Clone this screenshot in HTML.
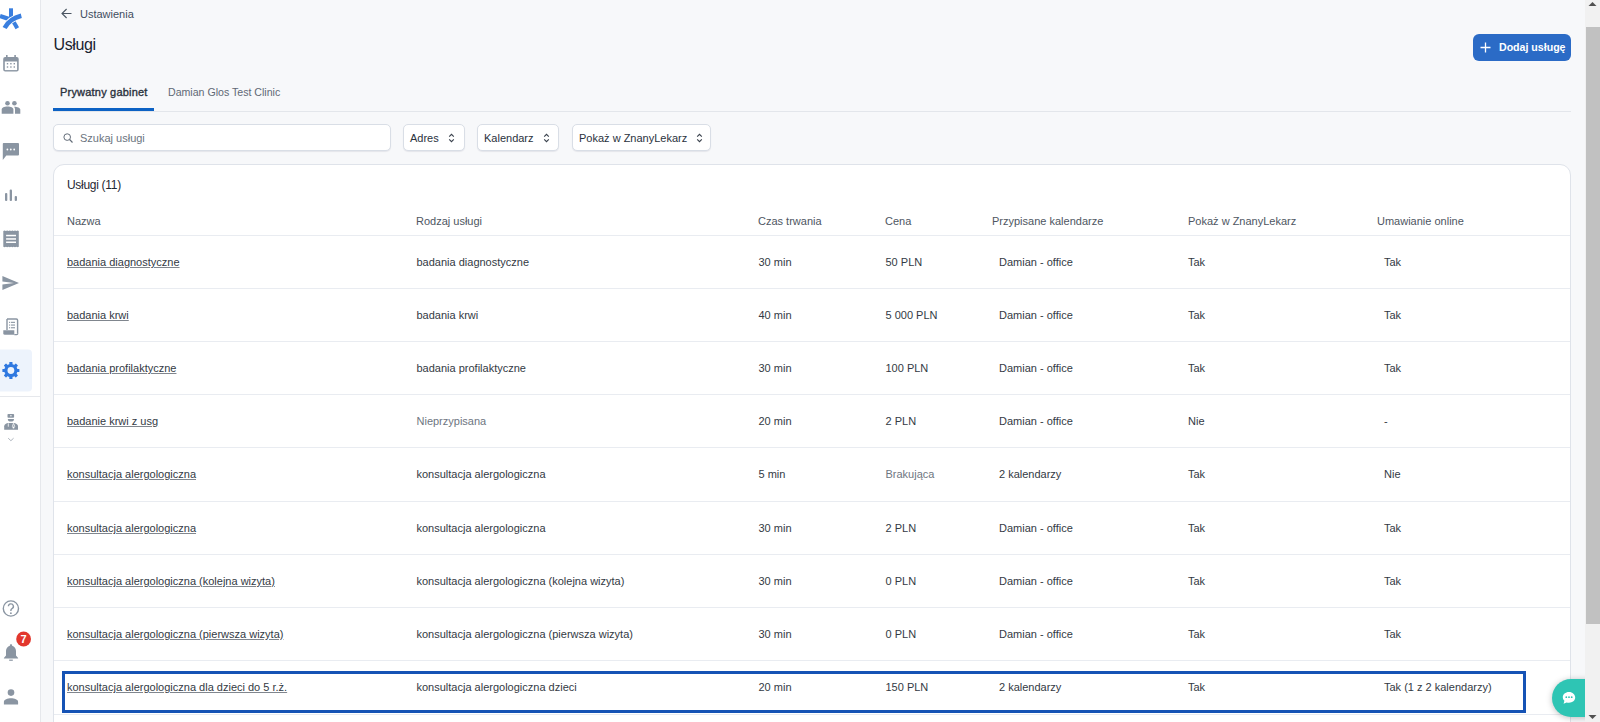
<!DOCTYPE html>
<html><head><meta charset="utf-8">
<style>
*{margin:0;padding:0;box-sizing:border-box}
html,body{width:1600px;height:722px;overflow:hidden}
body{background:#f7f8fa;font-family:"Liberation Sans",sans-serif;font-size:11px;color:#333a44;position:relative}
.a{position:absolute;white-space:nowrap;line-height:13px}
.g{color:#6e7681}
#side{position:absolute;left:0;top:0;width:41px;height:722px;background:#fff;border-right:1px solid #e6e8ec}
.ic{fill:#8a95a2}
#scroll{position:absolute;left:1585px;top:0;width:15px;height:722px;background:#f1f1f1}
#thumb{position:absolute;left:1px;top:27px;width:14px;height:597px;background:#c1c1c1}
.btn{position:absolute;left:1473px;top:34px;width:98px;height:27px;background:#2b6bc6;border-radius:6px;color:#fff}
.sel{position:absolute;top:124px;height:27px;background:#fff;border:1px solid #d9dee6;border-radius:5px;box-shadow:0 1px 1px rgba(20,30,60,.08)}
#card{position:absolute;left:53px;top:164px;width:1518px;height:600px;background:#fff;border:1px solid #dfe3ea;border-radius:11px}
.hl{position:absolute;left:54px;width:1516px;height:1px;background:#e9ecf1}
.lnk{text-decoration:underline;text-decoration-color:#80868e;text-underline-offset:1px}
.hd{color:#4e5662}
</style></head><body>

<div id="side">
<svg width="40" height="722" viewBox="0 0 40 722" style="position:absolute;left:0;top:0">
<!-- logo -->
<g fill="none" stroke="#3a7fdf" stroke-width="4" stroke-linecap="butt">
 <path d="M11 8.3V17"/>
 <path d="M0 16L10 19.4" stroke-width="4.4"/>
 <path d="M13.7 21.9L17.3 28.3"/>
</g>
<path d="M4.6 28C8.3 21.3 13.3 17.7 21.3 15.8" fill="none" stroke="#fff" stroke-width="6.2"/>
<path d="M4.6 28C8.3 21.3 13.3 17.7 21.3 15.8" fill="none" stroke="#3a7fdf" stroke-width="4.6"/>
<!-- calendar -->
<g class="ic">
 <path d="M5.2 57h11.5a2 2 0 0 1 2 2v10.6a2 2 0 0 1-2 2H5.2a2 2 0 0 1-2-2V59a2 2 0 0 1 2-2z"/>
 <rect x="6" y="55" width="1.6" height="3"/><rect x="14.3" y="55" width="1.6" height="3"/>
</g>
<rect x="4.8" y="61.5" width="12.3" height="8.6" fill="#fff"/>
<g class="ic"><rect x="6.8" y="63" width="1.4" height="1.4"/><rect x="10.2" y="63" width="1.4" height="1.4"/><rect x="13.6" y="63" width="1.4" height="1.4"/>
<rect x="6.8" y="66.3" width="1.4" height="1.4"/><rect x="10.2" y="66.3" width="1.4" height="1.4"/><rect x="13.6" y="66.3" width="1.4" height="1.4"/></g>
<!-- people -->
<g class="ic">
 <circle cx="7.5" cy="103.2" r="2.3"/><circle cx="14.4" cy="103.2" r="2.3"/>
 <path d="M1.7 113.8V109.5c0-1.8 2.5-3 5.8-3s5.9 1.2 5.9 3v4.3z"/>
 <path d="M15 113.8V109c0-.8-.3-1.5-.9-2.3c3.3 0 6.2 1.2 6.2 2.8v4.3z"/>
</g>
<!-- chat -->
<path class="ic" d="M4 143h14a1 1 0 0 1 1 1v10.5a1 1 0 0 1-1 1H6.3L2.8 160V144a1 1 0 0 1 1.2-1z"/>
<g fill="#fff"><circle cx="7.4" cy="149.5" r="0.9"/><circle cx="10.8" cy="149.5" r="0.9"/><circle cx="14.2" cy="149.5" r="0.9"/></g>
<!-- bars -->
<g class="ic"><rect x="5" y="193" width="2.3" height="8" rx="1"/><rect x="9.7" y="189.4" width="2.3" height="11.6" rx="1"/><rect x="14.7" y="196" width="2.3" height="5" rx="1"/></g>
<!-- receipt -->
<path class="ic" d="M3.3 231l1.3-.6 1.3.6 1.3-.6 1.3.6 1.3-.6 1.3.6 1.3-.6 1.3.6 1.3-.6 1.3.6 1.3-.6 1.2.6V246.7l-1.2.6-1.3-.6-1.3.6-1.3-.6-1.3.6-1.3-.6-1.3.6-1.3-.6-1.3.6-1.3-.6-1.3.6-1.3-.6z"/>
<g fill="#fff"><rect x="6.1" y="234.8" width="9.9" height="1.5"/><rect x="6.1" y="238.2" width="9.9" height="1.5"/><rect x="6.1" y="241.5" width="9.9" height="1.5"/></g>
<!-- send -->
<path class="ic" d="M2.4 276L19 283L2.4 290L2.4 284.5L14 283L2.4 281.5z"/>
<!-- doc scroll -->
<path d="M7 319h9.3a1.3 1.3 0 0 1 1.3 1.3V333.5" fill="none" stroke="#8a95a2" stroke-width="1.4"/>
<path d="M7 319v11" fill="none" stroke="#8a95a2" stroke-width="1.4"/>
<path class="ic" d="M3.3 330.2h11v4.5H4.8a1.5 1.5 0 0 1-1.5-1.5z"/>
<path d="M14.3 334.7h2.3a1.4 1.4 0 0 0 1.3-1.3" fill="none" stroke="#8a95a2" stroke-width="1.2"/>
<g class="ic"><rect x="9" y="321.8" width="1.2" height="1.1"/><rect x="11" y="321.8" width="4" height="1.1"/><rect x="9" y="324.5" width="1.2" height="1.1"/><rect x="11" y="324.5" width="4" height="1.1"/><rect x="9" y="327.2" width="1.2" height="1.1"/><rect x="11" y="327.2" width="4" height="1.1"/></g>
<!-- active -->
<rect x="-4" y="349.5" width="36" height="42" rx="4" fill="#edf3fc"/>
<g fill="#2f78e0"><circle cx="10.9" cy="370.5" r="6.6"/><rect x="9.3" y="362" width="3.2" height="4" rx="0.5" transform="rotate(0 10.9 370.5)"/><rect x="9.3" y="362" width="3.2" height="4" rx="0.5" transform="rotate(45 10.9 370.5)"/><rect x="9.3" y="362" width="3.2" height="4" rx="0.5" transform="rotate(90 10.9 370.5)"/><rect x="9.3" y="362" width="3.2" height="4" rx="0.5" transform="rotate(135 10.9 370.5)"/><rect x="9.3" y="362" width="3.2" height="4" rx="0.5" transform="rotate(180 10.9 370.5)"/><rect x="9.3" y="362" width="3.2" height="4" rx="0.5" transform="rotate(225 10.9 370.5)"/><rect x="9.3" y="362" width="3.2" height="4" rx="0.5" transform="rotate(270 10.9 370.5)"/><rect x="9.3" y="362" width="3.2" height="4" rx="0.5" transform="rotate(315 10.9 370.5)"/></g><circle cx="10.9" cy="370.5" r="3.4" fill="#edf3fc"/>
<rect x="0" y="396" width="40" height="1" fill="#e6e8ec"/>
<!-- doctor -->
<g class="ic">
 <rect x="7.5" y="413.9" width="6.6" height="3.9" rx="0.8"/>
 <path d="M7.8 418.9H14A3.1 2.6 0 0 1 7.8 418.9z"/>
 <path d="M4.2 429.8V426.2c0-1.6 1.6-2.6 3.4-3.2H14.4c1.9.6 3.6 1.6 3.6 3.2V429.8z"/>
</g>
<rect x="10.3" y="415.1" width="1.2" height="1.3" fill="#fff"/>
<path d="M8.3 423.3v3.4M13.4 423.3l-1.1 3.5M13.6 423.3l1.2 3.5" fill="none" stroke="#fff" stroke-width="0.8"/>
<circle cx="13.5" cy="427.6" r="1" fill="#fff"/>
<path d="M8.2 438.2l2.7 2.5 2.7-2.5" fill="none" stroke="#a4acb5" stroke-width="0.9"/>
<!-- help -->
<circle cx="10.9" cy="608.5" r="7.6" fill="none" stroke="#8a95a2" stroke-width="1.4"/>
<path d="M8.4 606.3a2.5 2.5 0 1 1 3.6 2.3c-.8.4-1.1.9-1.1 1.7v.7" fill="none" stroke="#8a95a2" stroke-width="1.4"/>
<circle cx="10.9" cy="613.2" r="0.9" fill="#8a95a2"/>
<!-- bell -->
<path class="ic" d="M11 644.2c.7 0 1.1.4 1.1 1v.5c2.4.6 3.9 2.7 3.9 5.3v4.6l2.1 2.3v.7H3.9v-.7L6 655.6V651c0-2.6 1.5-4.7 3.9-5.3v-.5c0-.6.4-1 1.1-1z"/>
<rect class="ic" x="9.2" y="659.6" width="3.6" height="1.2"/>
<circle cx="23.6" cy="639" r="7.4" fill="#e2372d"/>
<text x="23.6" y="643.2" text-anchor="middle" font-family="Liberation Sans" font-weight="bold" font-size="11" fill="#fff">7</text>
<!-- person -->
<g class="ic"><circle cx="11" cy="692.6" r="3.3"/><path d="M3.9 704.5v-2.6c0-2.2 3.6-3.6 7.1-3.6s7.1 1.4 7.1 3.6v2.6z"/></g>
</svg>
</div>

<svg style="position:absolute;left:61px;top:8px" width="11" height="11" viewBox="0 0 11 11"><path d="M10.5 5.5H1.2M5.6 1L1 5.5L5.6 10" fill="none" stroke="#4a5562" stroke-width="1.1"/></svg>
<div class="a" style="left:80px;top:8px;color:#3f4d5e">Ustawienia</div>
<div class="a" style="left:53.5px;top:36px;font-size:16px;letter-spacing:-0.4px;line-height:18px;color:#1b2330">Usługi</div>

<div class="btn">
  <svg style="position:absolute;left:7px;top:8px" width="11" height="11" viewBox="0 0 11 11"><path d="M5.5 0.5V10.5M0.5 5.5H10.5" stroke="#fff" stroke-width="1.3"/></svg>
  <div class="a" style="left:26px;top:7px;font-weight:bold;font-size:10.6px;color:#fff">Dodaj usługę</div>
</div>

<div class="a" style="left:60px;top:86px;font-size:11px;letter-spacing:0.2px;-webkit-text-stroke:0.35px #2a323d;color:#2a323d">Prywatny gabinet</div>
<div class="a" style="left:168px;top:86px;font-size:10.6px;color:#5f6875">Damian Glos Test Clinic</div>
<div style="position:absolute;left:53px;top:111px;width:1518px;height:1px;background:#e3e6eb"></div>
<div style="position:absolute;left:53px;top:108px;width:101px;height:3px;background:#0d62c4"></div>

<div class="sel" style="left:53px;width:338px">
  <svg style="position:absolute;left:9px;top:8px" width="10" height="10" viewBox="0 0 10 10"><circle cx="4.2" cy="4.1" r="3.3" fill="none" stroke="#636c78" stroke-width="1"/><path d="M6.6 6.5L9.5 9.5" stroke="#636c78" stroke-width="1.1"/></svg>
  <div class="a" style="left:26px;top:7px;color:#6b7480">Szukaj usługi</div>
</div>
<div class="sel" style="left:403px;width:62px">
  <div class="a" style="left:6px;top:7px;color:#2a323d">Adres</div>
  <svg style="position:absolute;left:44px;top:8px" width="7" height="10" viewBox="0 0 7 10"><path d="M1.2 3.7L3.5 1.3L5.8 3.7M1.2 6.3L3.5 8.7L5.8 6.3" fill="none" stroke="#3a424d" stroke-width="1.1"/></svg>
</div>
<div class="sel" style="left:477px;width:82px">
  <div class="a" style="left:6px;top:7px;color:#2a323d">Kalendarz</div>
  <svg style="position:absolute;left:65px;top:8px" width="7" height="10" viewBox="0 0 7 10"><path d="M1.2 3.7L3.5 1.3L5.8 3.7M1.2 6.3L3.5 8.7L5.8 6.3" fill="none" stroke="#3a424d" stroke-width="1.1"/></svg>
</div>
<div class="sel" style="left:572px;width:139px">
  <div class="a" style="left:6px;top:7px;color:#2a323d">Pokaż w ZnanyLekarz</div>
  <svg style="position:absolute;left:123px;top:8px" width="7" height="10" viewBox="0 0 7 10"><path d="M1.2 3.7L3.5 1.3L5.8 3.7M1.2 6.3L3.5 8.7L5.8 6.3" fill="none" stroke="#3a424d" stroke-width="1.1"/></svg>
</div>

<div id="card"></div>
<div class="a" style="left:67px;top:179px;font-size:12px;letter-spacing:-0.3px;color:#1f2732">Usługi (11)</div>
<div class="a hd" style="left:67px;top:215px">Nazwa</div>
<div class="a hd" style="left:416px;top:215px">Rodzaj usługi</div>
<div class="a hd" style="left:758px;top:215px">Czas trwania</div>
<div class="a hd" style="left:885px;top:215px">Cena</div>
<div class="a hd" style="left:992px;top:215px">Przypisane kalendarze</div>
<div class="a hd" style="left:1188px;top:215px">Pokaż w ZnanyLekarz</div>
<div class="a hd" style="left:1377px;top:215px">Umawianie online</div>
<div class="hl" style="top:235.0px"></div>
<div class="a lnk" style="left:67px;top:256.0px">badania diagnostyczne</div>
<div class="a" style="left:416.5px;top:256.0px">badania diagnostyczne</div>
<div class="a" style="left:758.5px;top:256.0px">30 min</div>
<div class="a" style="left:885.5px;top:256.0px">50 PLN</div>
<div class="a" style="left:999px;top:256.0px">Damian - office</div>
<div class="a" style="left:1188px;top:256.0px">Tak</div>
<div class="a" style="left:1384px;top:256.0px">Tak</div>
<div class="hl" style="top:288.0px"></div>
<div class="a lnk" style="left:67px;top:309.0px">badania krwi</div>
<div class="a" style="left:416.5px;top:309.0px">badania krwi</div>
<div class="a" style="left:758.5px;top:309.0px">40 min</div>
<div class="a" style="left:885.5px;top:309.0px">5 000 PLN</div>
<div class="a" style="left:999px;top:309.0px">Damian - office</div>
<div class="a" style="left:1188px;top:309.0px">Tak</div>
<div class="a" style="left:1384px;top:309.0px">Tak</div>
<div class="hl" style="top:341.0px"></div>
<div class="a lnk" style="left:67px;top:362.0px">badania profilaktyczne</div>
<div class="a" style="left:416.5px;top:362.0px">badania profilaktyczne</div>
<div class="a" style="left:758.5px;top:362.0px">30 min</div>
<div class="a" style="left:885.5px;top:362.0px">100 PLN</div>
<div class="a" style="left:999px;top:362.0px">Damian - office</div>
<div class="a" style="left:1188px;top:362.0px">Tak</div>
<div class="a" style="left:1384px;top:362.0px">Tak</div>
<div class="hl" style="top:394.0px"></div>
<div class="a lnk" style="left:67px;top:415.0px">badanie krwi z usg</div>
<div class="a g" style="left:416.5px;top:415.0px">Nieprzypisana</div>
<div class="a" style="left:758.5px;top:415.0px">20 min</div>
<div class="a" style="left:885.5px;top:415.0px">2 PLN</div>
<div class="a" style="left:999px;top:415.0px">Damian - office</div>
<div class="a" style="left:1188px;top:415.0px">Nie</div>
<div class="a" style="left:1384px;top:415.0px">-</div>
<div class="hl" style="top:447.0px"></div>
<div class="a lnk" style="left:67px;top:468.0px">konsultacja alergologiczna</div>
<div class="a" style="left:416.5px;top:468.0px">konsultacja alergologiczna</div>
<div class="a" style="left:758.5px;top:468.0px">5 min</div>
<div class="a g" style="left:885.5px;top:468.0px">Brakująca</div>
<div class="a" style="left:999px;top:468.0px">2 kalendarzy</div>
<div class="a" style="left:1188px;top:468.0px">Tak</div>
<div class="a" style="left:1384px;top:468.0px">Nie</div>
<div class="hl" style="top:501.0px"></div>
<div class="a lnk" style="left:67px;top:522.0px">konsultacja alergologiczna</div>
<div class="a" style="left:416.5px;top:522.0px">konsultacja alergologiczna</div>
<div class="a" style="left:758.5px;top:522.0px">30 min</div>
<div class="a" style="left:885.5px;top:522.0px">2 PLN</div>
<div class="a" style="left:999px;top:522.0px">Damian - office</div>
<div class="a" style="left:1188px;top:522.0px">Tak</div>
<div class="a" style="left:1384px;top:522.0px">Tak</div>
<div class="hl" style="top:554.0px"></div>
<div class="a lnk" style="left:67px;top:575.0px">konsultacja alergologiczna (kolejna wizyta)</div>
<div class="a" style="left:416.5px;top:575.0px">konsultacja alergologiczna (kolejna wizyta)</div>
<div class="a" style="left:758.5px;top:575.0px">30 min</div>
<div class="a" style="left:885.5px;top:575.0px">0 PLN</div>
<div class="a" style="left:999px;top:575.0px">Damian - office</div>
<div class="a" style="left:1188px;top:575.0px">Tak</div>
<div class="a" style="left:1384px;top:575.0px">Tak</div>
<div class="hl" style="top:607.0px"></div>
<div class="a lnk" style="left:67px;top:628.0px">konsultacja alergologiczna (pierwsza wizyta)</div>
<div class="a" style="left:416.5px;top:628.0px">konsultacja alergologiczna (pierwsza wizyta)</div>
<div class="a" style="left:758.5px;top:628.0px">30 min</div>
<div class="a" style="left:885.5px;top:628.0px">0 PLN</div>
<div class="a" style="left:999px;top:628.0px">Damian - office</div>
<div class="a" style="left:1188px;top:628.0px">Tak</div>
<div class="a" style="left:1384px;top:628.0px">Tak</div>
<div class="hl" style="top:660.0px"></div>
<div class="a lnk" style="left:67px;top:681.0px">konsultacja alergologiczna dla dzieci do 5 r.ż.</div>
<div class="a" style="left:416.5px;top:681.0px">konsultacja alergologiczna dzieci</div>
<div class="a" style="left:758.5px;top:681.0px">20 min</div>
<div class="a" style="left:885.5px;top:681.0px">150 PLN</div>
<div class="a" style="left:999px;top:681.0px">2 kalendarzy</div>
<div class="a" style="left:1188px;top:681.0px">Tak</div>
<div class="a" style="left:1384px;top:681.0px">Tak (1 z 2 kalendarzy)</div>
<div class="hl" style="top:714.0px"></div>

<div style="position:absolute;left:62px;top:671px;width:1464px;height:42px;border:3px solid #1653b5"></div>

<div style="position:absolute;left:1552px;top:679px;width:48px;height:38px;border-radius:19px 0 0 19px;background:#2ec5b4;box-shadow:0 1px 6px rgba(0,0,0,.25)">
 <svg style="position:absolute;left:9px;top:11px" width="16" height="16" viewBox="0 0 16 16"><path d="M8 2C4.4 2 1.8 4.3 1.8 7.2c0 1.4.6 2.6 1.6 3.5L2.6 13.8l3-1.4c.8.3 1.6.4 2.4.4 3.6 0 6.2-2.3 6.2-5.2S11.6 2 8 2z" fill="#fff"/><g fill="#2ec5b4"><circle cx="5.3" cy="7.2" r="0.9"/><circle cx="8" cy="7.2" r="0.9"/><circle cx="10.7" cy="7.2" r="0.9"/></g></svg>
</div>

<div id="scroll"><div id="thumb"></div>
 <svg style="position:absolute;left:3px;top:1px" width="9" height="6" viewBox="0 0 9 6"><path d="M0.5 5L4.5 1L8.5 5z" fill="#505050"/></svg>
 <svg style="position:absolute;left:3px;top:714px" width="9" height="6" viewBox="0 0 9 6"><path d="M0.5 1L4.5 5L8.5 1z" fill="#505050"/></svg>
</div>
</body></html>
